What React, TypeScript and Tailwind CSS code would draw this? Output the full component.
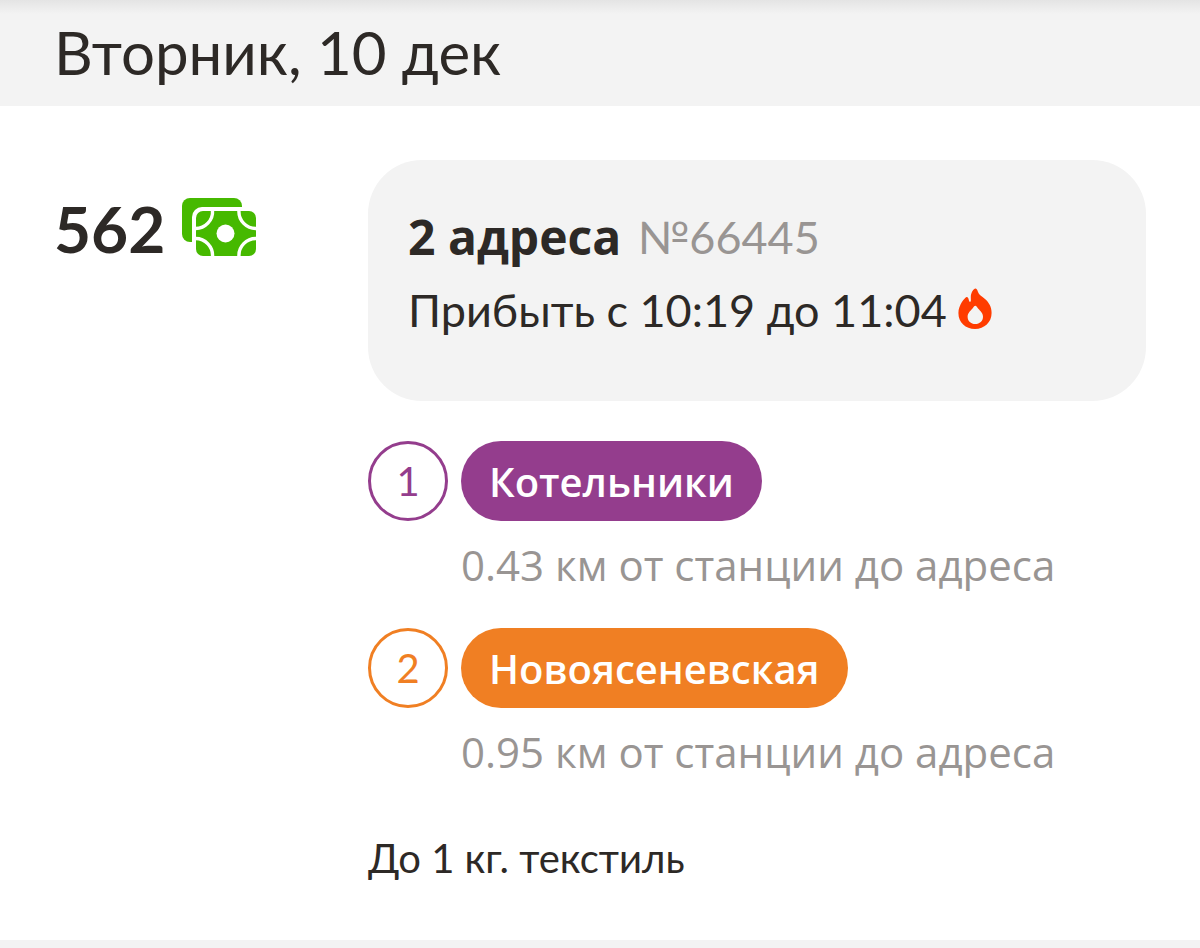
import React from 'react';

interface Stop {
    id: number;
    station: string;
    distance: string;
    badge: string;
    pill: string;
}

const stops: Stop[] = [
    {
        id: 1,
        station: 'Котельники',
        distance: '0.43 км от станции до адреса',
        badge: 'border-[#943d8d] text-[#943d8d]',
        pill: 'bg-[#943d8d]',
    },
    {
        id: 2,
        station: 'Новоясеневская',
        distance: '0.95 км от станции до адреса',
        badge: 'border-[#f07f23] text-[#f07f23]',
        pill: 'bg-[#f07f23]',
    },
];

const MoneyIcon: React.FC = () => (
    <svg width="74" height="58" viewBox="0 0 74 58" aria-hidden="true" className="shrink-0">
        <rect width="60" height="44" rx="8" fill="#46b900" />
        <rect x="10" y="9" width="68" height="54" rx="10" fill="#fff" />
        <rect x="14" y="13" width="60" height="45" rx="7" fill="#46b900" />
        <g fill="none" stroke="#fff" strokeWidth="3.4">
            <path d="M13 30.5A17 17 0 0 0 30.500 12" />
            <path d="M57 12A17 17 0 0 0 75 30.500" />
            <path d="M13 40.500A17 17 0 0 1 30.500 59" />
            <path d="M57 59A17 17 0 0 1 75 40.500" />
        </g>
        <circle cx="43.500" cy="35.500" r="9" fill="#fff" />
    </svg>
);

const FireIcon: React.FC = () => (
    <svg width="34" height="41" viewBox="0 0 34 41" aria-hidden="true" className="shrink-0">
        <path
            fill="#ff3c00"
            fillRule="evenodd"
            d="M17.600.6C16 .2 12.900 4.500 12.800 9c0 2 .3 3.800-.2 4.500-.5.600-1.200.2-1.500-.6-.5-1.500-.6-3.900-2.200-3.900C7 9 .4 17 .4 25c0 9.500 7.200 16 16.600 16s16.600-6.800 16.600-16c0-6-2.600-10.500-6.600-14-3.500-3-6-4-7-7C19.400 2.500 19 .9 17.600.6ZM17.300 17.700c1 0 1.500 1.300 3 3 2 2.200 4.700 4.300 4.700 8 0 4.300-3.300 7.300-7.700 7.300s-7.700-3-7.700-7.300c0-3.700 2.700-5.800 4.700-8 1.500-1.700 2-3 3-3Z"
        />
    </svg>
);

const App: React.FC = () => {
    return (
        <div className="min-h-screen bg-white font-['Lato','Noto_Sans',sans-serif] text-[#2d2926]">
            <header className="h-[106px] bg-[linear-gradient(#e4e4e4,#f3f3f3_14px)] px-[54px] pt-4">
                <h1 className="text-[60px] leading-[72px]">Вторник, 10 дек</h1>
            </header>

            <main className="flex px-[54px] pt-[54px] pb-[54px]">
                <div className="mt-[37px] flex h-[60px] w-[314px] shrink-0 items-center gap-[17px]">
                    <span className="pt-1 text-[64px] font-bold leading-[60px]">562</span>
                    <MoneyIcon />
                </div>

                <div className="min-w-0 flex-1">
                    <section className="rounded-[54px] bg-[#f3f3f3] px-10 pt-10 pb-[54px]">
                        <h2 className="flex gap-4 leading-[74px]">
                            <span className="font-['Open_Sans',sans-serif] text-[48px] font-bold">2 адреса</span>
                            <span className="text-[45px] text-[#999593]">№66445</span>
                        </h2>
                        <p className="flex items-center gap-[11px] text-[45px] leading-[73px]">
                            Прибыть с 10:19 до 11:04
                            <span className="pb-1">
                                <FireIcon />
                            </span>
                        </p>
                    </section>

                    <ol className="mt-10 flex flex-col gap-[31px] font-['Open_Sans',sans-serif]">
                        {stops.map((stop) => (
                            <li key={stop.id}>
                                <div className="flex gap-[13px]">
                                    <span className={`flex size-20 items-center justify-center rounded-full border-[3px] font-['Lato',sans-serif] text-[40px] ${stop.badge}`}>
                                        {stop.id}
                                    </span>
                                    <span className={`flex h-20 items-center rounded-full px-7 pt-0.5 text-[40px] font-semibold text-white ${stop.pill}`}>
                                        {stop.station}
                                    </span>
                                </div>
                                <p className="mt-3.5 pb-0.5 pl-[93px] text-[42px] leading-[60px] text-[#999593]">{stop.distance}</p>
                            </li>
                        ))}
                    </ol>

                    <p className="mt-[46px] text-[40px] leading-[56px]">До 1 кг. текстиль</p>
                </div>
            </main>

            <div className="h-2 bg-[#f3f3f3]" />
        </div>
    );
};

export default App;
